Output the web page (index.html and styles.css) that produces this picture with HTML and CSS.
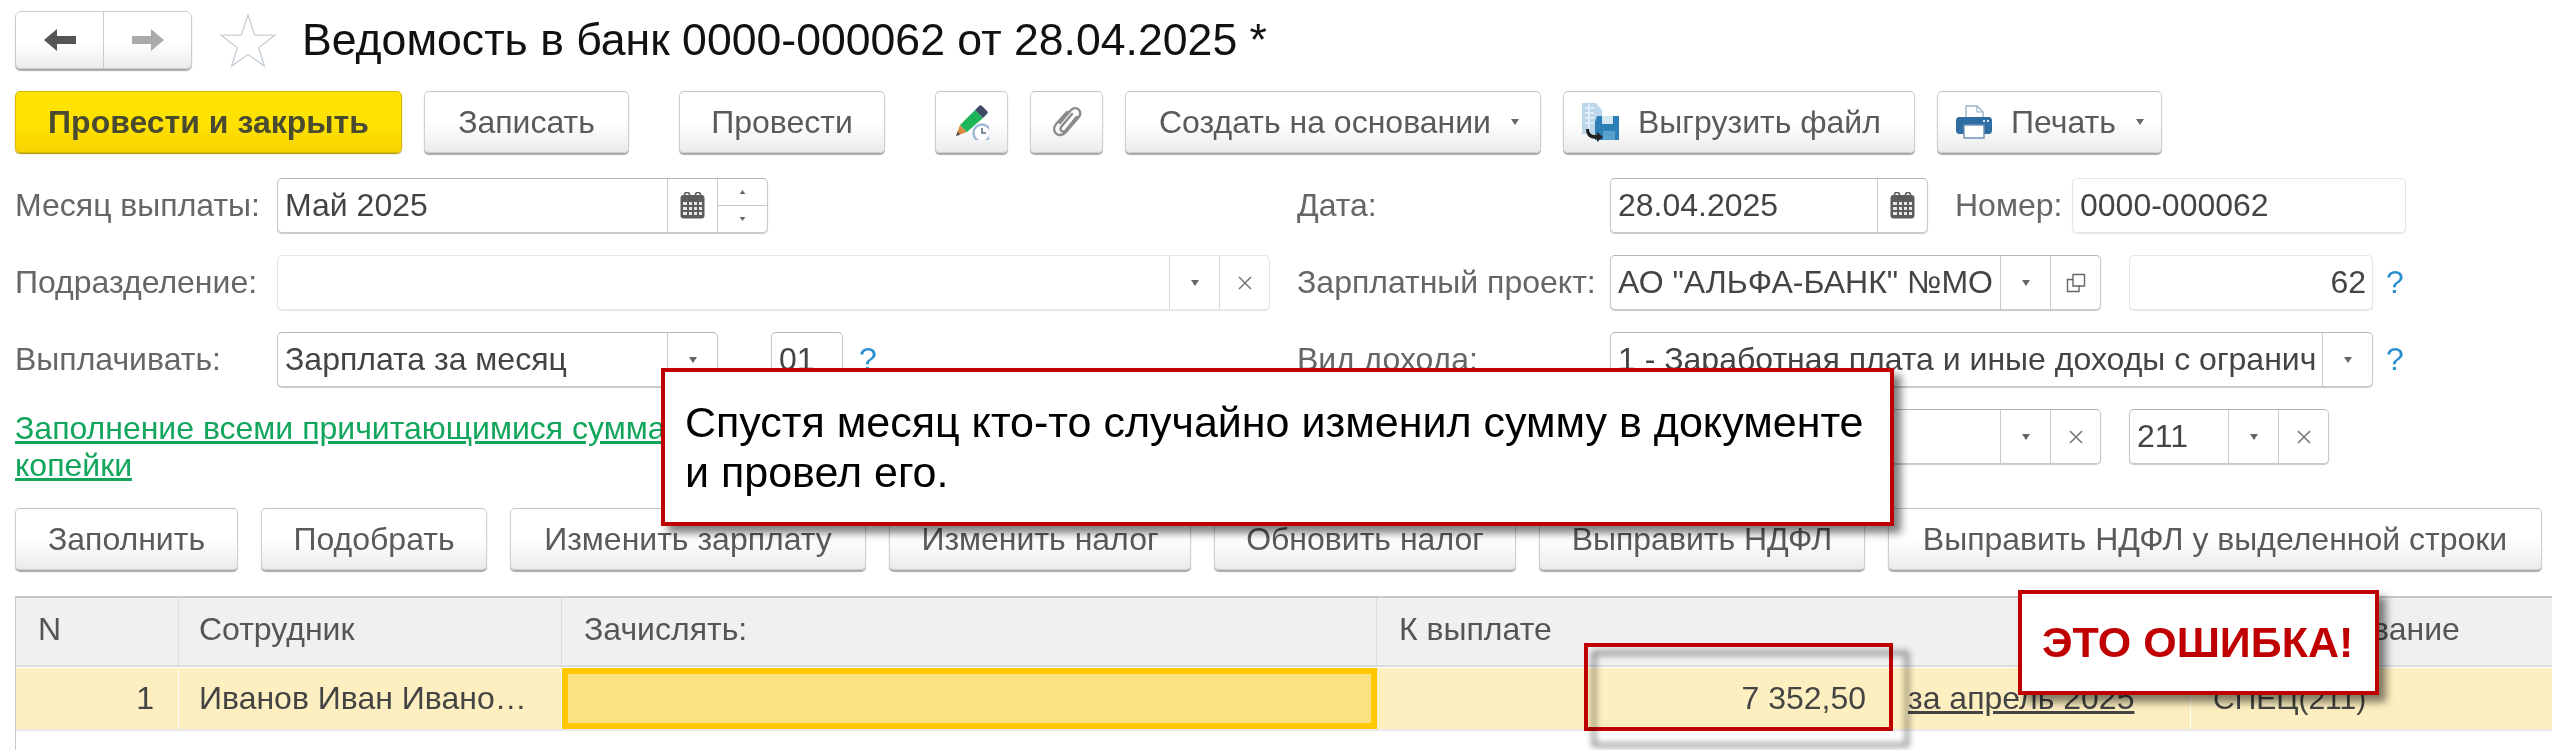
FILE: index.html
```html
<!DOCTYPE html>
<html lang="ru">
<head>
<meta charset="utf-8">
<title>Ведомость в банк</title>
<link rel="stylesheet" href="styles.css">
</head>
<body>
<svg class="defs" width="0" height="0" aria-hidden="true">
  <symbol id="caret" viewBox="0 0 10 8"><path d="M1 1h8L5 7z" fill="#666"/></symbol>
  <symbol id="cross" viewBox="0 0 16 16"><path d="M2 2l12 12M14 2L2 14" stroke="#777" stroke-width="1.6" fill="none"/></symbol>
  <symbol id="calendar" viewBox="0 0 25 27">
    <rect x="0.5" y="3" width="24" height="23.5" rx="3" fill="#5c5c5c"/>
    <circle cx="7" cy="3" r="2.6" fill="none" stroke="#5c5c5c" stroke-width="1.6"/>
    <circle cx="18" cy="3" r="2.6" fill="none" stroke="#5c5c5c" stroke-width="1.6"/>
    <path d="M3 10h4v3H3zM9 10h3v3H9zM14 10h3v3h-3zM19 10h3v3h-3zM3 15h4v3H3zM9 15h3v3H9zM14 15h3v3h-3zM19 15h3v3h-3zM3 20h4v3H3zM9 20h3v3H9zM14 20h3v3h-3zM19 20h3v3h-3z" fill="#e8e8e8"/>
  </symbol>
</svg>

<div class="page">
  <header class="head">
    <div class="nav">
      <span class="nav-btn">
        <svg class="nav-icon" viewBox="0 0 34 24"><path d="M14 1v7h19v8H14v7L1 12z" fill="#555"/></svg>
      </span>
      <span class="nav-btn">
        <svg class="nav-icon" viewBox="0 0 34 24"><path d="M20 1v7H1v8h19v7l13-11z" fill="#aaa"/></svg>
      </span>
    </div>
    <svg class="star" viewBox="0 0 58 56"><path d="M29 2l7 21h21L40 36l6 19-17-12-17 12 6-19L1 23h21z" fill="#fff" stroke="#c8cfd6" stroke-width="1.4"/></svg>
    <h1 class="title">Ведомость в банк 0000-000062 от 28.04.2025 *</h1>
  </header>

  <div class="toolbar">
    <button class="btn btn-primary">Провести и закрыть</button>
    <button class="btn btn-write">Записать</button>
    <button class="btn btn-post btn-far">Провести</button>
    <button class="btn btn-icon btn-far">
      <svg class="icon-pencil" viewBox="0 0 34 36">
        <path d="M1 32l4-11 7 7z" fill="#d98c3f"/>
        <path d="M1 32l1.6-4.5 2.9 2.9z" fill="#555"/>
        <path d="M5 21L20 6l8 8-16 14z" fill="#1eb45a"/>
        <path d="M20 6l4-4c1-1 2-1 3 0l5 5c1 1 1 2 0 3l-4 4z" fill="#3f4a66"/>
        <circle cx="27" cy="29" r="8.500" fill="#fff" stroke="#9db6d6" stroke-width="2.4"/>
        <path d="M27 24v5h4" fill="none" stroke="#5a6d88" stroke-width="1.6"/>
      </svg>
    </button>
    <button class="btn btn-icon">
      <svg class="icon-clip" viewBox="0 0 30 32">
        <path d="M8 17L19 4c2.500-2.500 6-2.500 8 0s1.500 5-.5 7.500L14 26c-3 3.500-7.500 4-10 1.500S1.500 21 4.500 17.500L15 6M20 8L9.500 20.500c-1.500 2-1 3.500 0 4.500s3 .5 4.500-1L24.500 11" fill="none" stroke="#8a8a8a" stroke-width="2.4" stroke-linecap="round"/>
      </svg>
    </button>
    <button class="btn btn-create">Создать на основании<svg class="caret btn-caret"><use href="#caret"/></svg></button>
    <button class="btn btn-export">
      <svg class="icon-export" viewBox="0 0 38 40">
        <path d="M1 1h14l6 7v24H1z" fill="#bcd6ea"/>
        <path d="M4 6h9M4 11h9M4 16h9M4 21h9M8 2v26" stroke="#e8f2fa" stroke-width="1.6"/>
        <path d="M16 14h22v24H14V20z" fill="#2e7fb5"/>
        <path d="M21 14h11v8H21z" fill="#d4e6f2"/>
        <path d="M22 29h12v9H22z" fill="#5aa0cf"/>
        <path d="M8 27c0 5 3 6 8 6v-3l6 5-6 5v-3c-7 0-11-3-11-10z" fill="#222"/>
      </svg>
      Выгрузить файл
    </button>
    <button class="btn btn-print">
      <svg class="icon-print" viewBox="0 0 36 34">
        <path d="M10 1h11l6 6v8H10z" fill="#fff" stroke="#9db3c8" stroke-width="1.4"/>
        <path d="M21 1v6h6" fill="none" stroke="#9db3c8" stroke-width="1.2"/>
        <path d="M3 12h30c1.500 0 3 1.500 3 3v11c0 1.500-1.500 3-3 3H3c-1.500 0-3-1.500-3-3V15c0-1.500 1.500-3 3-3z" fill="#2f6da3"/>
        <path d="M8 20h20v13H8z" fill="#fff" stroke="#6f93b5" stroke-width="1.4"/>
        <path d="M27 15h2v2h-2zM31 15h2v2h-2z" fill="#cfe0ee"/>
      </svg>
      Печать<svg class="caret"><use href="#caret"/></svg>
    </button>
  </div>

  <div class="form">
    <div class="form-col form-left">
      <div class="form-row">
        <label class="label label-left">Месяц выплаты:</label>
        <div class="field field-month">
          <span class="value">Май 2025</span>
          <span class="field-btn"><svg class="icon-cal"><use href="#calendar"/></svg></span>
          <span class="spinner">
            <span class="spin"><svg class="spin-up" viewBox="0 0 10 8"><path d="M1 7h8L5 1z" fill="#666"/></svg></span>
            <span class="spin"><svg class="spin-down" viewBox="0 0 10 8"><path d="M1 1h8L5 7z" fill="#666"/></svg></span>
          </span>
        </div>
      </div>
      <div class="form-row">
        <label class="label label-left">Подразделение:</label>
        <div class="field field-muted field-dept">
          <span class="value"></span>
          <span class="field-btn"><svg class="caret"><use href="#caret"/></svg></span>
          <span class="field-btn"><svg class="cross"><use href="#cross"/></svg></span>
        </div>
      </div>
      <div class="form-row">
        <label class="label label-left">Выплачивать:</label>
        <div class="field field-pay">
          <span class="value">Зарплата за месяц</span>
          <span class="field-btn"><svg class="caret"><use href="#caret"/></svg></span>
        </div>
        <div class="field field-code"><span class="value">01</span></div>
        <span class="hint">?</span>
      </div>
      <a class="link" href="#">Заполнение всеми причитающимися суммами<br>копейки</a>
    </div>

    <div class="form-col form-right">
      <div class="form-row">
        <label class="label label-right">Дата:</label>
        <div class="field field-date">
          <span class="value">28.04.2025</span>
          <span class="field-btn"><svg class="icon-cal"><use href="#calendar"/></svg></span>
        </div>
        <label class="label label-number">Номер:</label>
        <div class="field field-muted field-number"><span class="value">0000-000062</span></div>
      </div>
      <div class="form-row">
        <label class="label label-right">Зарплатный проект:</label>
        <div class="field field-project">
          <span class="value">АО "АЛЬФА-БАНК" №МОСКВА</span>
          <span class="field-btn"><svg class="caret"><use href="#caret"/></svg></span>
          <span class="field-btn">
            <svg class="icon-open" viewBox="0 0 20 20"><path d="M7 1.500h11.500V13H7zM7 6.500H1.500V18.500H13V13" fill="none" stroke="#666" stroke-width="1.4"/></svg>
          </span>
        </div>
        <div class="field field-muted field-sum"><span class="value value-right">62</span></div>
        <span class="hint hint-sum">?</span>
      </div>
      <div class="form-row">
        <label class="label label-right">Вид дохода:</label>
        <div class="field field-income">
          <span class="value">1 - Заработная плата и иные доходы с ограничением</span>
          <span class="field-btn"><svg class="caret"><use href="#caret"/></svg></span>
        </div>
        <span class="hint hint-sum">?</span>
      </div>
      <div class="form-row">
        <span class="label label-right"></span>
        <div class="field field-project">
          <span class="value"></span>
          <span class="field-btn"><svg class="caret"><use href="#caret"/></svg></span>
          <span class="field-btn"><svg class="cross"><use href="#cross"/></svg></span>
        </div>
        <div class="field field-kbk">
          <span class="value">211</span>
          <span class="field-btn"><svg class="caret"><use href="#caret"/></svg></span>
          <span class="field-btn"><svg class="cross"><use href="#cross"/></svg></span>
        </div>
      </div>
    </div>
  </div>

  <div class="toolbar toolbar-table">
    <button class="btn btn-fill">Заполнить</button>
    <button class="btn btn-pick">Подобрать</button>
    <button class="btn btn-salary">Изменить зарплату</button>
    <button class="btn btn-tax">Изменить налог</button>
    <button class="btn btn-refresh">Обновить налог</button>
    <button class="btn btn-fix">Выправить НДФЛ</button>
    <button class="btn btn-fixrow">Выправить НДФЛ у выделенной строки</button>
  </div>

  <div class="table">
    <div class="tr th-row">
      <div class="cell c-n">N</div>
      <div class="cell c-emp">Сотрудник</div>
      <div class="cell c-credit">Зачислять:</div>
      <div class="cell c-pay-head">К выплате</div>
      <div class="cell c-name c-name-head">Наименование</div>
    </div>
    <div class="tr td-row">
      <div class="cell c-n cell-right">1</div>
      <div class="cell c-emp"><span class="ellipsis">Иванов Иван Иванович</span></div>
      <div class="cell c-credit cell-active"></div>
      <div class="cell c-pay cell-right">7 352,50</div>
      <div class="cell c-basis"><a class="doc-link" href="#">за апрель 2025</a></div>
      <div class="cell c-name c-name-value">СПЕЦ(211)</div>
    </div>
  </div>

  <div class="callout callout-note">Спустя месяц кто-то случайно изменил сумму в документе<br>и провел его.</div>
  <div class="callout callout-error">ЭТО ОШИБКА!</div>
  <div class="frame"></div>
</div>
</body>
</html>
```
FILE: styles.css
```css
* { box-sizing: border-box; }
html, body { margin: 0; height: 100%; background: #fff; overflow: hidden; }
.defs { position: absolute; }
.page {
  position: relative;
  width: 2552px;
  height: 750px;
  padding: 11px 0 0 15px;
  overflow: hidden;
  font-family: "Liberation Sans", Arial, sans-serif;
  font-size: 32px;
  color: #444;
  filter: blur(0.6px);
}
svg { display: block; flex: none; }

/* Header */
.head { display: flex; align-items: center; height: 58px; }
.nav {
  display: flex;
  width: 177px;
  height: 58px;
  border: 1px solid #ccc;
  border-radius: 6px;
  background: linear-gradient(#fff 55%, #ececec);
  box-shadow: 0 2px 1px #aaa;
}
.nav-btn { flex: 1; display: flex; align-items: center; justify-content: center; }
.nav-btn + .nav-btn { border-left: 1px solid #ccc; }
.nav-icon { width: 34px; height: 24px; }
.star { width: 56px; height: 54px; margin-left: 28px; }
.title {
  margin: 0 0 0 26px;
  font-weight: 400;
  font-size: 44.6px;
  color: #111;
  white-space: nowrap;
}

/* Buttons */
.toolbar { display: flex; gap: 22px; height: 63px; margin-top: 22px; }
.btn {
  display: flex;
  align-items: center;
  justify-content: center;
  height: 62px;
  padding: 0;
  border: 1px solid #cfcfcf;
  border-top-color: #c4c4c4;
  border-radius: 5px;
  background: linear-gradient(#fff 50%, #ebebeb);
  box-shadow: 0 2px 1px #a8a8a8;
  font: inherit;
  font-size: 32px;
  color: #5a5a5a;
  white-space: nowrap;
}
.btn-primary {
  width: 387px;
  border-color: #d8b800;
  background: linear-gradient(#ffe300 50%, #f7d200);
  box-shadow: 0 1px 1px #a89000;
  font-weight: 700;
  color: #4a4a30;
}
.btn-write { width: 205px; }
.btn-post { width: 206px; }
.btn-far { margin-left: 28px; }
.btn-icon { width: 73px; }
.icon-pencil { width: 34px; height: 36px; }
.icon-clip { width: 30px; height: 32px; }
.btn-create { width: 416px; justify-content: flex-start; padding-left: 33px; }
.btn-export { width: 352px; justify-content: flex-start; padding-left: 17px; gap: 19px; }
.btn-print { width: 225px; justify-content: flex-start; padding-left: 18px; gap: 19px; }
.icon-export { width: 38px; height: 40px; }
.icon-print { width: 36px; height: 34px; }
.caret { width: 10px; height: 8px; }
.btn-caret { margin-left: 19px; }

/* Form */
.form { display: flex; margin-top: 24px; }
.form-col { display: flex; flex-direction: column; gap: 22px; }
.form-left { width: 1282px; }
.form-row { display: flex; align-items: center; height: 55px; }
.label { color: #666; white-space: nowrap; }
.label-left { width: 262px; }
.label-right { width: 313px; }
.label-number { margin-left: 27px; width: 117px; }
.field {
  display: flex;
  height: 55px;
  border: 1px solid #c9c9c9;
  border-top-color: #b5b5b5;
  border-radius: 5px;
  background: #fff;
  box-shadow: 0 1px 1px #c8c8c8;
  color: #444;
}
.field-muted { border-color: #e6e6e6; box-shadow: 0 1px 1px #e6e6e6; }
.value {
  flex: 1;
  min-width: 0;
  margin: 0 6px 0 7px;
  line-height: 53px;
  white-space: nowrap;
  overflow: hidden;
}
.value-right { text-align: right; }
.field-btn {
  display: flex;
  align-items: center;
  justify-content: center;
  width: 50px;
  flex: none;
  border-left: 1px solid #c9c9c9;
}
.field-muted .field-btn { border-left-color: #d8d8d8; }
.cross { width: 16px; height: 16px; }
.icon-cal { width: 25px; height: 27px; }
.icon-open { width: 20px; height: 20px; }
.spinner { display: flex; flex-direction: column; width: 50px; border-left: 1px solid #c9c9c9; }
.spin { flex: 1; display: flex; align-items: center; justify-content: center; }
.spin + .spin { border-top: 1px solid #c9c9c9; }
.spin-up, .spin-down { width: 7px; height: 6px; }
.field-month { width: 491px; }
.field-dept { width: 993px; }
.field-pay { width: 441px; }
.field-code { width: 72px; margin-left: 53px; }
.hint { margin-left: 16px; color: #2a8fcf; }
.hint-sum { margin-left: 13px; }
.link {
  display: block;
  margin-top: 1px;
  line-height: 37px;
  color: #12a55c;
  text-decoration: underline;
  white-space: nowrap;
}
.field-date { width: 318px; }
.field-number { width: 334px; }
.field-project { width: 491px; }
.field-sum { width: 244px; margin-left: 28px; }
.field-income { width: 763px; }
.field-kbk { width: 200px; margin-left: 28px; }

/* Table toolbar */
.toolbar-table { margin-top: 24px; gap: 23px; }
.btn-fill { width: 223px; }
.btn-pick { width: 226px; }
.btn-salary { width: 356px; }
.btn-tax { width: 302px; }
.btn-refresh { width: 302px; }
.btn-fix { width: 326px; }
.btn-fixrow { width: 654px; }

/* Table */
.table {
  margin-top: 25px;
  height: 160px;
  border-left: 1px solid #c8c8c8;
  border-top: 2px solid #c8c8c8;
}
.tr { display: flex; }
.th-row {
  height: 69px;
  background: #f0f0f0;
  border-bottom: 2px solid #dcdcdc;
}
.th-row .cell { padding-bottom: 4px; }
.td-row {
  height: 63px;
  margin-top: 1px;
  background: #fdefc0;
  border-bottom: 2px solid #e8e8e8;
}
.cell {
  display: flex;
  align-items: center;
  min-width: 0;
  padding: 0 22px;
  font-size: 32px;
  border-right: 1px solid #dcdcdc;
  color: #555;
  white-space: nowrap;
}
.td-row .cell { border-right-color: #fff; color: #444; }
.c-n { width: 163px; }
.c-emp { width: 383px; padding-left: 20px; }
.c-credit { width: 815px; }
.c-pay-head { width: 814px; }
.c-pay { width: 514px; }
.c-basis { width: 300px; padding-left: 17px; }
.c-name { flex: 1; border-right: 0; }
.c-name-head { padding-left: 47px; }
.c-name-value { font-size: 30px; }
.cell-right { justify-content: flex-end; padding-right: 24px; }
.ellipsis { overflow: hidden; text-overflow: ellipsis; padding-right: 10px; }
.td-row .cell-active { background: #fde283; border: 6px solid #ffc800; }
.doc-link { color: #444; text-decoration: underline; }

/* Overlays */
.callout {
  position: absolute;
  background: #fff;
  border: 4px solid #c00000;
  box-shadow: 7px 7px 8px rgba(0, 0, 0, .5);
  color: #000;
  white-space: nowrap;
}
.callout-note {
  left: 661px;
  top: 368px;
  width: 1233px;
  height: 158px;
  padding: 25px 0 0 20px;
  font-size: 43px;
  line-height: 50px;
}
.callout-error {
  left: 2018px;
  top: 590px;
  width: 361px;
  height: 105px;
  padding-left: 20px;
  font-size: 43px;
  font-weight: 700;
  line-height: 97px;
  color: #c00000;
}
.frame {
  position: absolute;
  left: 1584px;
  top: 643px;
  width: 309px;
  height: 88px;
  border: 4px solid #c00000;
}
.frame::before {
  content: "";
  position: absolute;
  left: 4px;
  top: 4px;
  width: 309px;
  height: 88px;
  border: 4px solid rgba(0, 0, 0, .45);
  filter: blur(3px);
}
```
